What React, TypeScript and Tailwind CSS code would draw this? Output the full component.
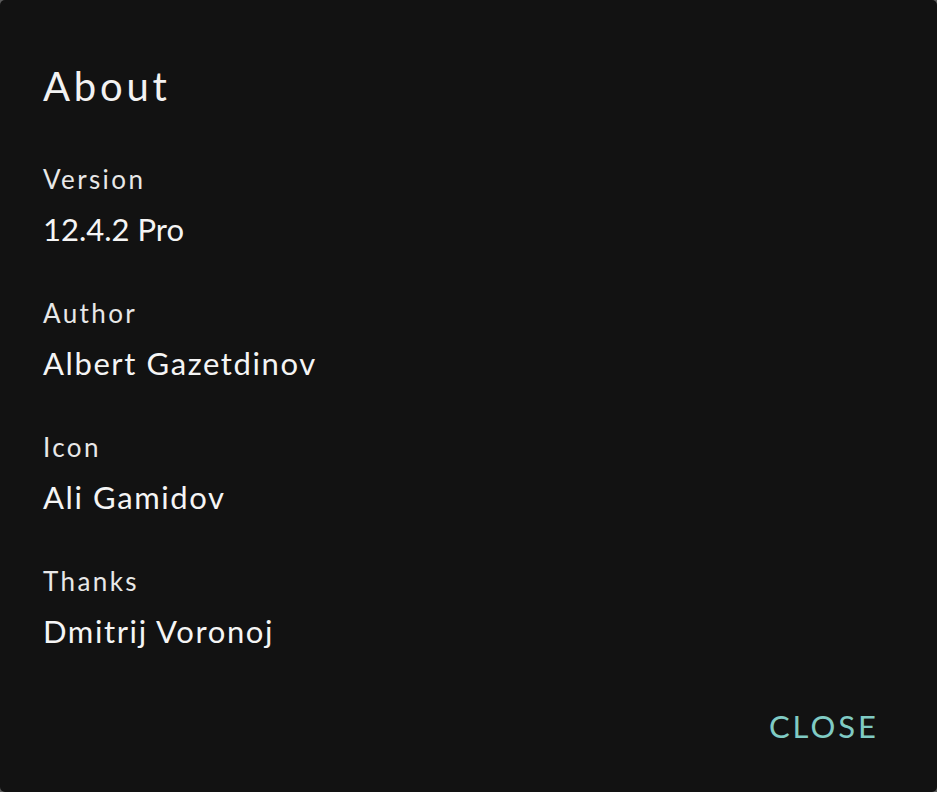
import React from "react";

const items = [
    { label: "Version", value: "12.4.2 Pro", tracking: "tracking-[0px]" },
    { label: "Author", value: "Albert Gazetdinov", tracking: "tracking-[1.6px]" },
    { label: "Icon", value: "Ali Gamidov", tracking: "tracking-[1.6px]" },
    { label: "Thanks", value: "Dmitrij Voronoj", tracking: "tracking-[1.6px]" },
];

// The about dialog: a title, four label/value pairs, and a single text button.
export default function App() {
    return (
        <div className="min-h-[792px] bg-[#5c5c5c] font-['Lato',sans-serif]">
            <div className="flex min-h-[792px] flex-col rounded-[5px] bg-[#121212] pl-[43px] pr-[58px] pt-[62px] pb-[46px]">
                <h1 className="text-[40px] leading-[48px] tracking-[3.8px] text-[#f2f2f2]">About</h1>

                <div className="mt-[53px] flex flex-col gap-[48px]">
                    {items.map((item) => (
                        <div key={item.label} className="flex flex-col gap-[14px]">
                            <span className="text-[26px] leading-[32px] tracking-[2.4px] text-[#e8e8e8]">{item.label}</span>
                            <span className={`text-[31px] leading-[40px] text-[#f5f5f5] ${item.tracking}`}>{item.value}</span>
                        </div>
                    ))}
                </div>

                <div className="mt-auto flex justify-end">
                    <button className="text-[31px] leading-[40px] tracking-[3px] text-[#80cbc4]">CLOSE</button>
                </div>
            </div>
        </div>
    );
}
